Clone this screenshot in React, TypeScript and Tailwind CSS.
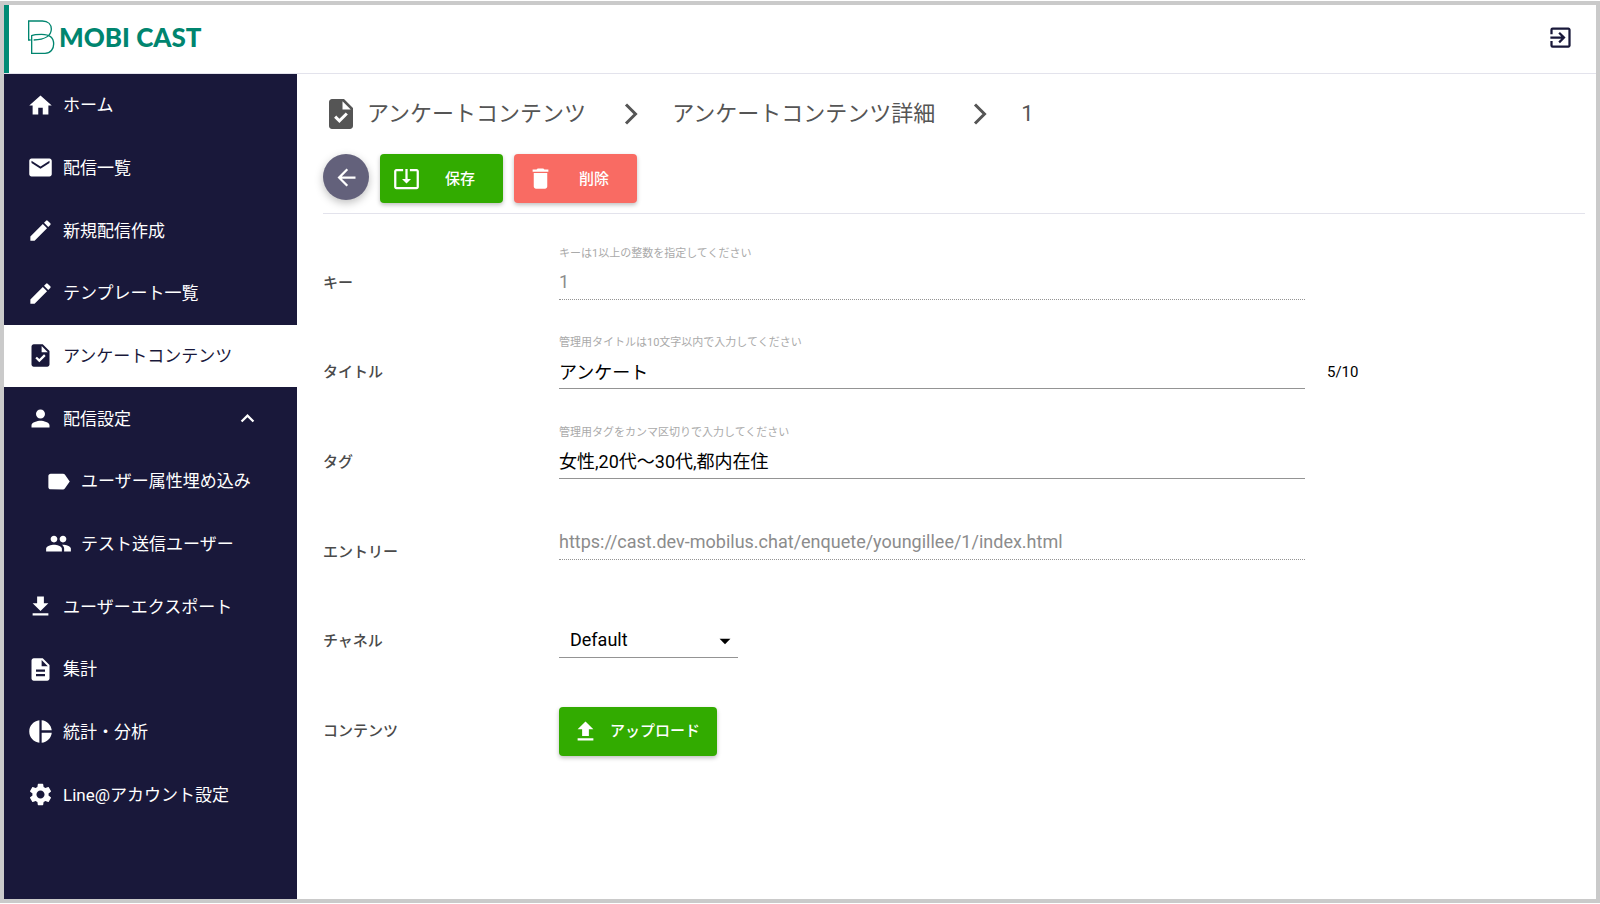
import { useState } from 'react'
import type { ReactNode } from 'react'
import type { IconType } from 'react-icons'
import {
  MdArrowBack,
  MdArrowDropDown,
  MdDelete,
  MdDescription,
  MdEdit,
  MdEmail,
  MdExitToApp,
  MdExpandLess,
  MdFileDownload,
  MdFileUpload,
  MdHome,
  MdLabel,
  MdPeople,
  MdPerson,
  MdPieChart,
  MdSettings,
  MdSystemUpdateAlt,
  MdTask,
} from 'react-icons/md'

interface MenuItem {
  label: string
  icon: IconType
  active?: boolean
  child?: boolean
  open?: boolean
}

const menu: MenuItem[] = [
  { label: 'ホーム', icon: MdHome },
  { label: '配信一覧', icon: MdEmail },
  { label: '新規配信作成', icon: MdEdit },
  { label: 'テンプレート一覧', icon: MdEdit },
  { label: 'アンケートコンテンツ', icon: MdTask, active: true },
  { label: '配信設定', icon: MdPerson, open: true },
  { label: 'ユーザー属性埋め込み', icon: MdLabel, child: true },
  { label: 'テスト送信ユーザー', icon: MdPeople, child: true },
  { label: 'ユーザーエクスポート', icon: MdFileDownload },
  { label: '集計', icon: MdDescription },
  { label: '統計・分析', icon: MdPieChart },
  { label: 'Line@アカウント設定', icon: MdSettings },
]

function LogoMark() {
  return (
    <svg viewBox="78 58 84 108" className="h-9 w-7" fill="none" stroke="#00856f" strokeWidth="4">
      <path d="M89 121H83V64H124C142 64 151 75 151 88C151 107 133 120 98 121" />
      <path d="M92 119V161H132C149 161 158 148 158 133C158 114 144 104 122 104C108 104 98 105 92 108V121" />
    </svg>
  )
}

function Chevron() {
  return (
    <svg viewBox="0 0 14 22" className="h-[22px] w-[14px]" fill="none" stroke="#555" strokeWidth="3">
      <path d="M2 1.5L11.5 11L2 20.5" />
    </svg>
  )
}

function Header() {
  return (
    <header className="flex h-[69px] items-center justify-between border-b border-[#e3e3ec] pr-[22px]">
      <a href="#" className="flex h-full items-center gap-1 border-l-[5px] border-[#008b75] pb-1 pl-[18px]">
        <LogoMark />
        <span className="font-[Lato] text-[26px] leading-8 font-black text-[#00856f]">MOBI CAST</span>
      </a>
      <button type="button" aria-label="ログアウト" className="pb-1 text-[#19183a]">
        <MdExitToApp size={27} />
      </button>
    </header>
  )
}

function Sidebar() {
  return (
    <nav className="w-[293px] shrink-0 bg-[#19183a]">
      <ul className="grid h-[752px] grid-rows-12">
        {menu.map(({ label, icon: Icon, active, child, open }) => (
          <li key={label}>
            <a
              href="#"
              className={`flex h-full items-center gap-[9px] pr-9 text-[17px] leading-6 ${
                child ? 'pl-[41px]' : 'pl-[23px]'
              } ${active ? 'bg-white text-[#19183a]' : 'text-white'}`}
            >
              <Icon size={27} className="shrink-0" />
              <span className="grow">{label}</span>
              {open && <MdExpandLess size={27} />}
            </a>
          </li>
        ))}
      </ul>
    </nav>
  )
}

function Breadcrumb() {
  return (
    <ol className="flex h-20 items-center text-[22px] leading-8 text-[#555]">
      <li className="flex items-center gap-2">
        <MdTask size={36} />
        <a href="#">アンケートコンテンツ</a>
      </li>
      <li className="flex items-center">
        <span className="pr-[34px] pl-[38px]">
          <Chevron />
        </span>
        <a href="#">アンケートコンテンツ詳細</a>
      </li>
      <li className="flex items-center">
        <span className="pr-[34px] pl-[38px]">
          <Chevron />
        </span>
        <span>1</span>
      </li>
    </ol>
  )
}

interface RowProps {
  id: string
  label: string
  hint?: string
  counter?: string
  className?: string
  children: ReactNode
}

function Row({ id, label, hint, counter, className = 'self-end pb-7', children }: RowProps) {
  return (
    <div className="grid grid-cols-[236px_1fr_280px] items-center">
      <label htmlFor={id} className="text-[15px] leading-5 font-medium text-[#4a4a4a]">
        {label}
      </label>
      <div className={className}>
        {hint && <p className="mb-0.5 text-[11px] leading-4 text-[#aaa]">{hint}</p>}
        {children}
      </div>
      {counter && <span className="pl-[22px] text-[15px] leading-5 text-black">{counter}</span>}
    </div>
  )
}

const inputClass =
  'block h-9 w-full border-b border-[#949494] bg-transparent text-[18px] leading-6 text-black outline-none disabled:border-dotted disabled:text-[#8c8c8c]'

export default function App() {
  const [title, setTitle] = useState('アンケート')
  const [tags, setTags] = useState('女性,20代〜30代,都内在住')

  return (
    <div className="min-h-screen bg-white py-px font-[Roboto,'Noto_Sans_CJK_JP',sans-serif]">
      <div className="flex min-h-[calc(100vh-2px)] flex-col border-4 border-[#cacaca]">
        <Header />
        <div className="flex grow">
          <Sidebar />
          <main className="grow pr-[11px] pl-[26px]">
            <Breadcrumb />

            {/* 操作ボタン */}
            <div className="flex items-start gap-[11px] border-b border-[#e3e3ec] pb-2.5">
              <button
                type="button"
                aria-label="戻る"
                className="flex size-[46px] items-center justify-center rounded-full bg-[#63617b] text-white shadow-[0_3px_8px_rgba(0,0,0,0.25)]"
              >
                <MdArrowBack size={27} />
              </button>
              <button
                type="button"
                className="flex h-[49px] w-[123px] items-center gap-[25px] rounded-sm bg-[#32ab00] pl-[13px] text-[15px] leading-5 font-medium text-white shadow-[0_2px_4px_rgba(0,0,0,0.25)]"
              >
                <MdSystemUpdateAlt size={27} />
                保存
              </button>
              <button
                type="button"
                className="flex h-[49px] w-[123px] items-center gap-[25px] rounded-sm bg-[#f96b63] pl-[13px] text-[15px] leading-5 font-medium text-white shadow-[0_2px_4px_rgba(0,0,0,0.25)]"
              >
                <MdDelete size={27} />
                削除
              </button>
            </div>

            {/* 入力フォーム */}
            <form className="mt-6 grid h-[538px] grid-rows-6">
              <Row id="key" label="キー" hint="キーは1以上の整数を指定してください">
                <input id="key" value="1" disabled className={inputClass} />
              </Row>
              <Row
                id="title"
                label="タイトル"
                hint="管理用タイトルは10文字以内で入力してください"
                counter={`${title.length}/10`}
              >
                <input
                  id="title"
                  value={title}
                  maxLength={10}
                  onChange={(e) => setTitle(e.target.value)}
                  className={inputClass}
                />
              </Row>
              <Row id="tags" label="タグ" hint="管理用タグをカンマ区切りで入力してください">
                <input id="tags" value={tags} onChange={(e) => setTags(e.target.value)} className={inputClass} />
              </Row>
              <Row id="entry" label="エントリー" className="self-end pb-[37px]">
                <input
                  id="entry"
                  value="https://cast.dev-mobilus.chat/enquete/youngillee/1/index.html"
                  disabled
                  className={inputClass}
                />
              </Row>
              <Row id="channel" label="チャネル">
                <div className="relative w-[179px]">
                  <select
                    id="channel"
                    className="block h-9 w-full appearance-none border-b border-[#949494] bg-transparent pl-[11px] text-[18px] leading-6 text-black outline-none"
                  >
                    <option>Default</option>
                  </select>
                  <MdArrowDropDown size={26} className="pointer-events-none absolute top-1.5 right-0" />
                </div>
              </Row>
              <Row id="upload" label="コンテンツ" className="">
                <button
                  id="upload"
                  type="button"
                  className="flex h-[49px] w-[158px] items-center gap-[11px] rounded-sm bg-[#32ab00] pl-[13px] text-[15px] leading-5 font-medium text-white shadow-[0_2px_4px_rgba(0,0,0,0.25)]"
                >
                  <MdFileUpload size={27} />
                  アップロード
                </button>
              </Row>
            </form>
          </main>
        </div>
      </div>
    </div>
  )
}
